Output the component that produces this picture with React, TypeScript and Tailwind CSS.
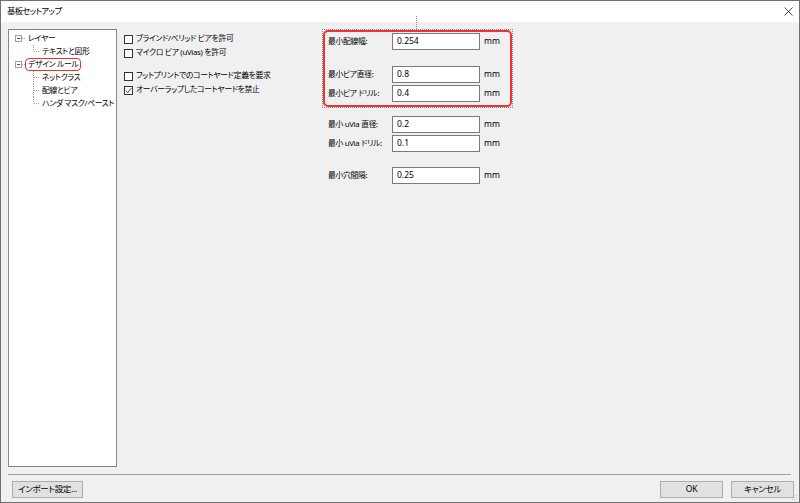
import React from "react";

const font =
  "font-['Noto_Sans','Noto_Sans_CJK_JP',sans-serif] [font-feature-settings:'palt'] text-[7.8px] tracking-[-0.3px] text-black leading-none";

function Expander() {
  return (
    <svg width="7" height="7" viewBox="0 0 7 7" className="ml-[6px] shrink-0">
      <rect x="0.5" y="0.5" width="6" height="6" fill="#fff" stroke="#a0a0a0" />
      <line x1="2" y1="3.5" x2="5" y2="3.5" stroke="#555" />
    </svg>
  );
}

function Connector({ last }: { last?: boolean }) {
  return (
    <svg width="8" height="13" viewBox="0 0 8 13" className="ml-[24px] shrink-0">
      <line x1="0.5" y1="0" x2="0.5" y2={last ? 6.5 : 13} stroke="#a0a0a0" strokeDasharray="1 1" />
      <line x1="1" y1="6.5" x2="7" y2="6.5" stroke="#a0a0a0" strokeDasharray="1 1" />
    </svg>
  );
}

function RootRow({ label, selected }: { label: string; selected?: boolean }) {
  return (
    <div className="flex h-[13px] items-center">
      <Expander />
      <div className="w-[3px] border-t border-dotted border-[#a0a0a0]" />
      <span
        className={
          selected
            ? "flex h-[13px] items-center whitespace-nowrap rounded-[4px] border-[1.5px] border-[#e8302c] px-[2px]"
            : "flex h-[13px] items-center whitespace-nowrap border-[1.5px] border-transparent px-[2px]"
        }
      >
        {label}
      </span>
    </div>
  );
}

function ChildRow({ label, last }: { label: string; last?: boolean }) {
  return (
    <div className="flex h-[13px] items-center">
      <Connector last={last} />
      <span className="ml-[1px] whitespace-nowrap">{label}</span>
    </div>
  );
}

function Check({ label, checked }: { label: string; checked?: boolean }) {
  return (
    <div className="flex h-[14px] items-center">
      <span className="flex h-[9px] w-[9px] shrink-0 items-center justify-center border border-[#333] bg-white">
        {checked && (
          <svg width="7" height="7" viewBox="0 0 7 7">
            <path d="M0.8 3.6 L2.7 5.6 L6.3 1.2" fill="none" stroke="#222" strokeWidth="0.9" />
          </svg>
        )}
      </span>
      <span className="ml-[3px] whitespace-nowrap">{label}</span>
    </div>
  );
}

function Field({ label, value, className = "" }: { label: string; value: string; className?: string }) {
  return (
    <div className={"flex items-center " + className}>
      <span className="w-[64px] whitespace-nowrap">{label}</span>
      <div className="flex h-[17px] w-[88px] items-center border border-[#7a7a7a] bg-white pl-[4px] text-[8.5px] tracking-normal">{value}</div>
      <span className="ml-[4px] text-[8.5px] tracking-normal">mm</span>
    </div>
  );
}

function Btn({ label, w }: { label: string; w: string }) {
  return (
    <div className={"flex h-[17px] items-center justify-center whitespace-nowrap border border-[#adadad] bg-[#e1e1e1] text-[8.5px] " + w}>{label}</div>
  );
}

export default function App() {
  return (
    <div className={"relative flex h-[503px] w-[800px] flex-col overflow-hidden border border-[#707070] bg-[#f0f0f0] " + font}>
      {/* title bar */}
      <div className="flex h-[21px] shrink-0 items-center justify-between bg-white pl-[6px] pr-[6px]">
        <span className="text-[8.3px] tracking-[-0.6px]">基板セットアップ</span>
        <svg width="9" height="9" viewBox="0 0 9 9">
          <path d="M0.5 0.5 L8.5 8.5 M8.5 0.5 L0.5 8.5" stroke="#333" strokeWidth="0.9" />
        </svg>
      </div>

      <div className="flex flex-1 flex-col pt-[7px]">
        <div className="flex h-[438px] shrink-0">
          {/* tree */}
          <div className="ml-[7px] w-[109px] border border-[#828790] bg-white pt-[2px]">
            <RootRow label="レイヤー" />
            <ChildRow label="テキストと図形" last />
            <RootRow label="デザイン ルール" selected />
            <ChildRow label="ネットクラス" />
            <ChildRow label="配線とビア" />
            <ChildRow label="ハンダ マスク/ペースト" last />
          </div>

          {/* checkboxes */}
          <div className="ml-[7px] w-[198px] pt-[3px]">
            <Check label="ブラインド/ベリッド ビアを許可" />
            <Check label="マイクロ ビア (uVias) を許可" />
            <div className="h-[9px]" />
            <Check label="フットプリントでのコートヤード定義を要求" />
            <Check label="オーバーラップしたコートヤードを禁止" checked />
          </div>

          {/* fields */}
          <div className="flex flex-col">
            <div className="w-[191px] border border-dotted border-[#8a8a8a]">
              <div className="rounded-[5px] border-2 border-[#ee3333] pb-[3px] pl-[3px] pt-[1px]">
                <Field label="最小配線幅:" value="0.254" />
                <Field label="最小ビア直径:" value="0.8" className="mt-[16px]" />
                <Field label="最小ビア ドリル:" value="0.4" className="mt-[2px]" />
              </div>
            </div>
            <div className="pl-[6px]">
              <Field label="最小 uVia 直径:" value="0.2" className="mt-[8px]" />
              <Field label="最小 uVia ドリル:" value="0.1" className="mt-[2px]" />
              <Field label="最小穴間隔:" value="0.25" className="mt-[15px]" />
            </div>
          </div>
        </div>

        {/* separator */}
        <div className="ml-[7px] mr-[8px] mt-[7px] h-px bg-[#a0a0a0]" />

        {/* buttons */}
        <div className="mt-[6px] flex items-center justify-between pl-[11px] pr-[5px]">
          <Btn label="インポート設定..." w="w-[71px]" />
          <div className="flex gap-[8px]">
            <Btn label="OK" w="w-[63px]" />
            <Btn label="キャンセル" w="w-[63px]" />
          </div>
        </div>
      </div>

      {/* splitter focus artifact */}
      <div className="absolute left-[415px] top-[15px] h-[13px] border-l border-dotted border-[#8a8a8a]" />

      {/* resize grip */}
      <svg width="7" height="7" viewBox="0 0 7 7" className="absolute bottom-[1px] right-[1px]">
        <rect x="5" y="1" width="1" height="1" fill="#bbb" />
        <rect x="3" y="3" width="1" height="1" fill="#bbb" />
        <rect x="5" y="3" width="1" height="1" fill="#bbb" />
        <rect x="1" y="5" width="1" height="1" fill="#bbb" />
        <rect x="3" y="5" width="1" height="1" fill="#bbb" />
        <rect x="5" y="5" width="1" height="1" fill="#bbb" />
      </svg>
    </div>
  );
}
